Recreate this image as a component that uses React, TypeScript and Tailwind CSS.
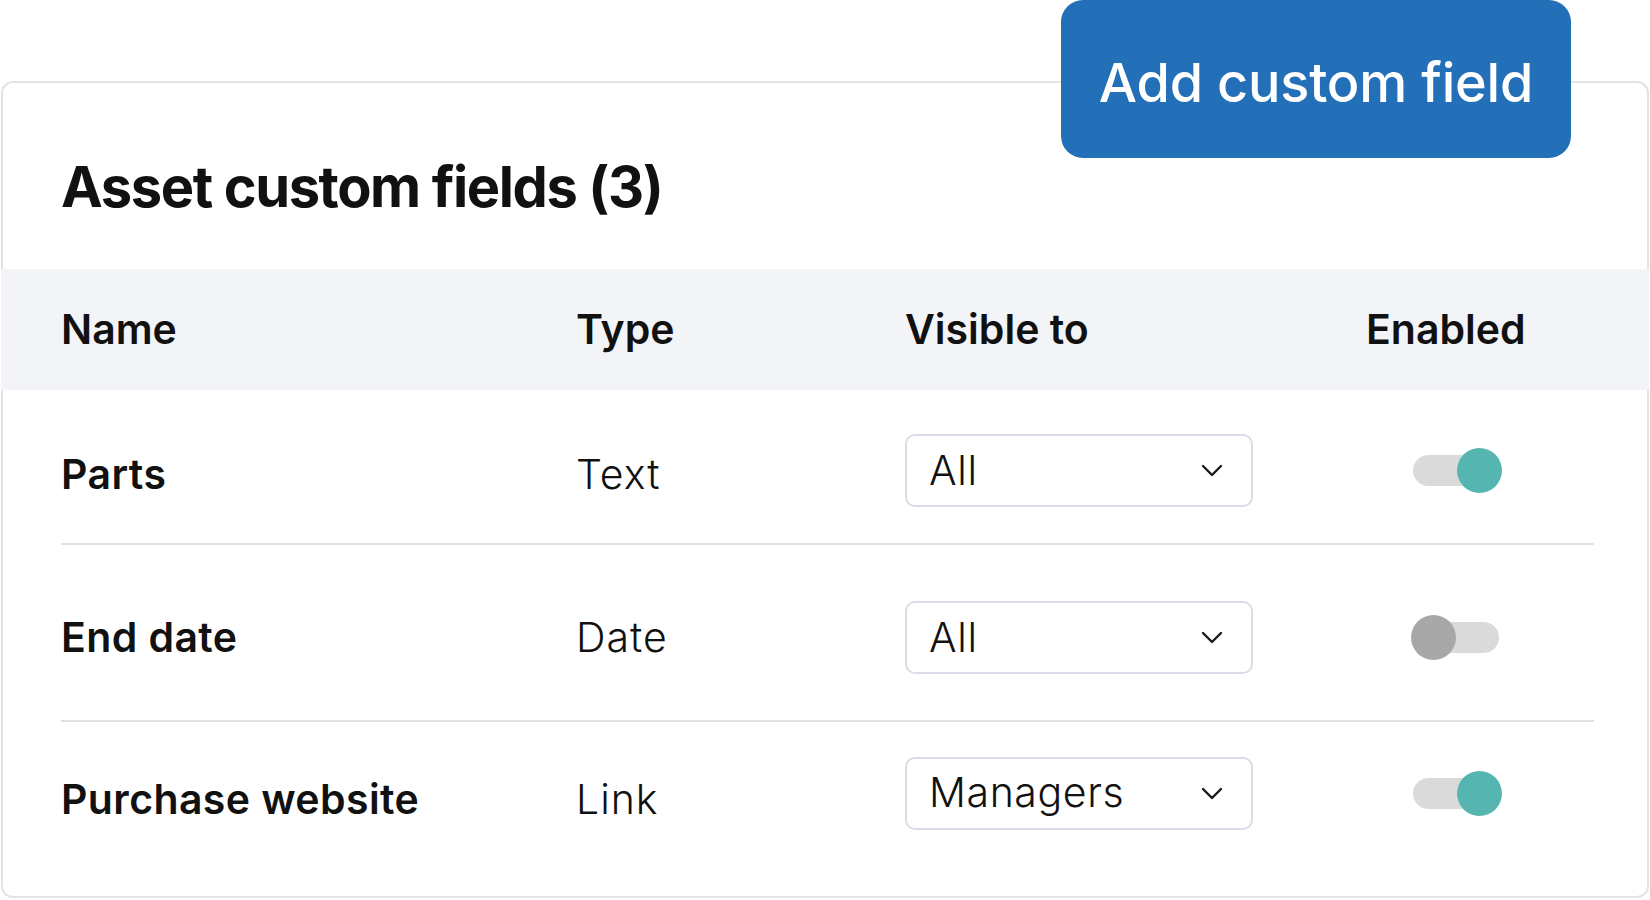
import React from "react"

type Field = {
  name: string
  type: string
  visible: string
  enabled: boolean
  row: string
  text: string
}

const fields: Field[] = [
  { name: "Parts", type: "Text", visible: "All", enabled: true, row: "h-[155px] pt-[8px] border-b-2 border-[#e0e0e0]", text: "mt-[8px]" },
  { name: "End date", type: "Date", visible: "All", enabled: false, row: "h-[177px] pt-[10px] border-b-2 border-[#e0e0e0]", text: "mt-[1px]" },
  { name: "Purchase website", type: "Link", visible: "Managers", enabled: true, row: "h-[174px] pb-[32px]", text: "mt-[14px]" },
]

function Chevron() {
  return (
    <svg width="22" height="13" viewBox="0 0 22 13" fill="none">
      <path d="M2 2l9 9 9-9" stroke="#1a1a1a" strokeWidth="2.4" strokeLinecap="round" strokeLinejoin="round" />
    </svg>
  )
}

function Toggle({ on }: { on: boolean }) {
  return (
    <div className="relative ml-[2px] h-[31px] w-[86px] rounded-full bg-[#dadada]">
      {on ? (
        <div className="absolute left-[44px] top-[-7px] h-[45px] w-[45px] rounded-full bg-[#55b5b0]" />
      ) : (
        <div className="absolute left-[-2px] top-[-7px] h-[45px] w-[45px] rounded-full bg-[#a8a8a8]" />
      )}
    </div>
  )
}

export default function App() {
  return (
    <div className="h-[900px] w-[1650px] overflow-hidden bg-white font-['Inter',sans-serif] text-[#111]">
      {/* Add button sits over the card's top edge */}
      <div className="relative z-10 flex justify-end pr-[79px]">
        <button className="flex h-[158px] w-[510px] items-center justify-center rounded-[22px] bg-[#236fb8] pt-[6px] text-[54px] font-medium tracking-[-0.2px] text-white">
          Add custom field
        </button>
      </div>

      {/* Card */}
      <div className="mx-[1px] -mt-[77px] h-[817px] rounded-[12px] border-2 border-[#e3e3e3]">
        <div className="flex h-[186px] items-center pl-[58px] pt-[22px]">
          <h1 className="text-[56px] font-bold leading-none tracking-[-1.4px]">
            Asset custom fields (3)
          </h1>
        </div>

        {/* Header */}
        <div className="-mx-[2px] grid h-[121px] grid-cols-[515px_329px_461px_1fr] items-center bg-[#f3f4f8] pl-[60px] text-[41px] font-semibold">
          <span>Name</span>
          <span>Type</span>
          <span>Visible to</span>
          <span>Enabled</span>
        </div>

        {/* Rows */}
        <div className="pl-[58px] pr-[53px]">
          {fields.map((f) => (
            <div key={f.name} className={"grid grid-cols-[515px_329px_461px_1fr] items-center " + f.row}>
              <span className={f.text + " text-[41px] font-semibold tracking-[0.4px]"}>{f.name}</span>
              <span className={f.text + " text-[41px] font-light tracking-[1px]"}>{f.type}</span>
              <div className="flex h-[73px] w-[348px] items-center justify-between rounded-[10px] border-2 border-[#dcdce8] pl-[22px] pr-[28px]">
                <span className="text-[41px] font-light tracking-[0.6px]">{f.visible}</span>
                <Chevron />
              </div>
              <div className="pl-[45px]">
                <Toggle on={f.enabled} />
              </div>
            </div>
          ))}
        </div>
      </div>
    </div>
  )
}
